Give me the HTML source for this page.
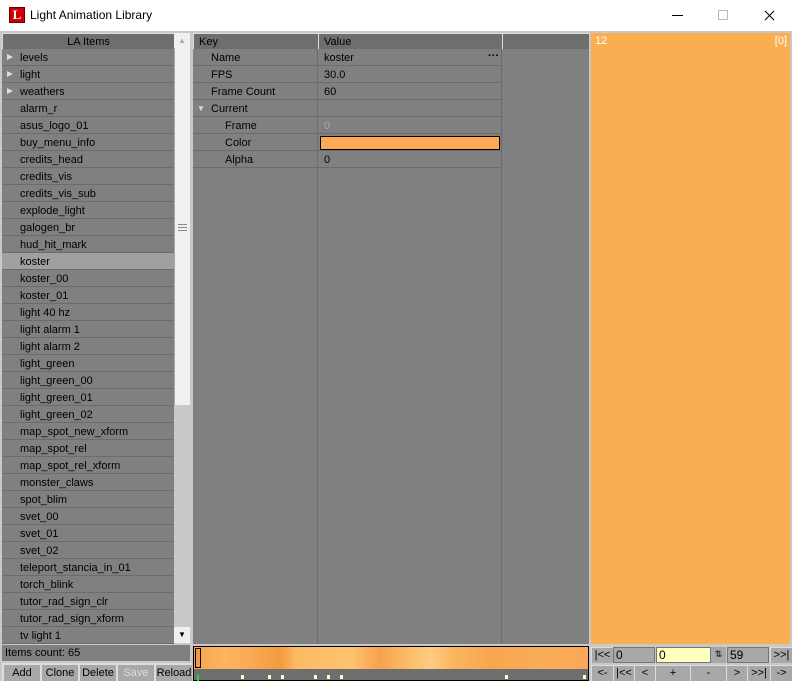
<!DOCTYPE html>
<html><head><meta charset="utf-8"><style>
*{margin:0;padding:0;box-sizing:border-box}
body{width:792px;height:681px;background:#fff;font-family:"Liberation Sans",sans-serif;font-size:11px;color:#000;position:relative;overflow:hidden}
.a{position:absolute}
.row{position:absolute;left:0;width:172px;height:17px;background:#808080;border-bottom:1px solid #6c6c6c;padding-left:18px;line-height:18px}
.tri{position:absolute;left:5px;top:5px;width:0;height:0;border-left:6px solid #ddd;border-top:3.5px solid transparent;border-bottom:3.5px solid transparent}
.pr{position:absolute;left:0;width:309px;height:17px;border-bottom:1px solid #6c6c6c;line-height:18px}
.pr span{top:0}
.btn{position:absolute;top:663px;height:18px;background:#a8a8a8;border-top:2px solid #ddd;border-left:2px solid #ddd;text-align:center;line-height:16px;font-size:11px}
.cb{position:absolute;height:16px;background:#a8a8a8;border-top:1px solid #ddd;border-left:1px solid #ddd;text-align:center;line-height:15px;font-size:11px}
</style></head><body>
<!-- title -->
<div class="a" style="left:9px;top:7px;width:16px;height:16px;background:#c00;border:1px solid #600;color:#fff;font-weight:bold;font-family:'Liberation Serif',serif;font-size:13px;line-height:14px;text-align:center">L</div>
<div class="a" style="left:30px;top:8px;font-size:12px">Light Animation Library</div>
<div class="a" style="left:672px;top:15px;width:11px;height:1px;background:#000"></div>
<div class="a" style="left:718px;top:10px;width:10px;height:10px;border:1px solid #bbb"></div>
<div class="a" style="left:763px;top:15px;width:13px;height:1px;background:#000;transform:rotate(45deg)"></div>
<div class="a" style="left:763px;top:15px;width:13px;height:1px;background:#000;transform:rotate(-45deg)"></div>
<!-- main bg -->
<div class="a" style="left:0;top:31px;width:792px;height:650px;background:#c8c8c8"></div>
<!-- left panel -->
<div class="a" style="left:2px;top:33px;width:172px;height:16px;background:#6e6e6e;border-top:1px solid #ddd;border-left:1px solid #ddd;text-align:center;line-height:16px">LA Items</div>
<div class="a" style="left:174px;top:33px;width:16px;height:15px;background:#f0f0f0;color:#aaa;font-size:8px;text-align:center;line-height:15px">▲</div>
<div class="a" style="left:174px;top:48px;width:16px;height:357px;background:#f0f0f0;border-left:1px solid #aaa"></div>
<div class="a" style="left:178px;top:224px;width:9px;height:7px;border-top:1px solid #888;border-bottom:1px solid #888"></div>
<div class="a" style="left:178px;top:227px;width:9px;height:1px;background:#888"></div>
<div class="a" style="left:174px;top:405px;width:16px;height:222px;background:#c8c8c8"></div>
<div class="a" style="left:174px;top:627px;width:16px;height:16px;background:#f0f0f0;font-size:8px;text-align:center;line-height:16px">▼</div>
<div class="a" style="left:2px;top:49px;width:172px;height:595px;background:#808080">
<div class="row" style="top:0"><span class="tri"></span>levels</div>
<div class="row" style="top:17px"><span class="tri"></span>light</div>
<div class="row" style="top:34px"><span class="tri"></span>weathers</div>
<div class="row" style="top:51px">alarm_r</div>
<div class="row" style="top:68px">asus_logo_01</div>
<div class="row" style="top:85px">buy_menu_info</div>
<div class="row" style="top:102px">credits_head</div>
<div class="row" style="top:119px">credits_vis</div>
<div class="row" style="top:136px">credits_vis_sub</div>
<div class="row" style="top:153px">explode_light</div>
<div class="row" style="top:170px">galogen_br</div>
<div class="row" style="top:187px">hud_hit_mark</div>
<div class="row" style="top:204px;background:#a0a0a0">koster</div>
<div class="row" style="top:221px">koster_00</div>
<div class="row" style="top:238px">koster_01</div>
<div class="row" style="top:255px">light 40 hz</div>
<div class="row" style="top:272px">light alarm 1</div>
<div class="row" style="top:289px">light alarm 2</div>
<div class="row" style="top:306px">light_green</div>
<div class="row" style="top:323px">light_green_00</div>
<div class="row" style="top:340px">light_green_01</div>
<div class="row" style="top:357px">light_green_02</div>
<div class="row" style="top:374px">map_spot_new_xform</div>
<div class="row" style="top:391px">map_spot_rel</div>
<div class="row" style="top:408px">map_spot_rel_xform</div>
<div class="row" style="top:425px">monster_claws</div>
<div class="row" style="top:442px">spot_blim</div>
<div class="row" style="top:459px">svet_00</div>
<div class="row" style="top:476px">svet_01</div>
<div class="row" style="top:493px">svet_02</div>
<div class="row" style="top:510px">teleport_stancia_in_01</div>
<div class="row" style="top:527px">torch_blink</div>
<div class="row" style="top:544px">tutor_rad_sign_clr</div>
<div class="row" style="top:561px">tutor_rad_sign_xform</div>
<div class="row" style="top:578px">tv light 1</div>
</div>
<div class="a" style="left:2px;top:645px;width:188px;height:16px;background:#808080;padding-left:3px;line-height:17px">Items count: 65</div>
<div class="btn" style="left:2px;width:38px">Add</div>
<div class="btn" style="left:40px;width:38px">Clone</div>
<div class="btn" style="left:78px;width:38px">Delete</div>
<div class="btn" style="left:116px;width:38px;color:#ddd">Save</div>
<div class="btn" style="left:154px;width:38px">Reload</div>
<!-- middle -->
<div class="a" style="left:193px;top:33px;width:396px;height:611px;background:#808080"></div>
<div class="a" style="left:193px;top:33px;width:125px;height:16px;background:#6e6e6e;border-top:1px solid #ddd;border-left:1px solid #ddd;padding-left:5px;line-height:16px">Key</div>
<div class="a" style="left:318px;top:33px;width:184px;height:16px;background:#6e6e6e;border-top:1px solid #ddd;border-left:1px solid #ddd;padding-left:5px;line-height:16px">Value</div>
<div class="a" style="left:502px;top:33px;width:87px;height:16px;background:#6e6e6e;border-top:1px solid #ddd;border-left:1px solid #ddd"></div>
<div class="a" style="left:317px;top:49px;width:1px;height:595px;background:#6c6c6c"></div>
<div class="a" style="left:501px;top:49px;width:1px;height:595px;background:#6c6c6c"></div>
<div class="a" style="left:193px;top:49px;width:309px;height:136px">
<div class="pr" style="top:0"><span class="a" style="left:18px">Name</span><span class="a" style="left:131px">koster</span><span class="a" style="left:295px;font-weight:bold;top:-2px">···</span></div>
<div class="pr" style="top:17px"><span class="a" style="left:18px">FPS</span><span class="a" style="left:131px">30.0</span></div>
<div class="pr" style="top:34px"><span class="a" style="left:18px">Frame Count</span><span class="a" style="left:131px">60</span></div>
<div class="pr" style="top:51px"><span class="a" style="left:4px;font-size:8px;color:#ddd">▼</span><span class="a" style="left:18px">Current</span></div>
<div class="pr" style="top:68px"><span class="a" style="left:32px">Frame</span><span class="a" style="left:131px;color:#aaa">0</span></div>
<div class="pr" style="top:85px"><span class="a" style="left:32px">Color</span><span class="a" style="left:127px;top:2px;width:180px;height:14px;background:#fda855;border:1px solid #000"></span></div>
<div class="pr" style="top:102px"><span class="a" style="left:32px">Alpha</span><span class="a" style="left:131px">0</span></div>
</div>
<!-- right orange -->
<div class="a" style="left:591px;top:33px;width:199px;height:611px;background:#f9ae52;color:#fff;font-size:11px"><span class="a" style="left:4px;top:2px">12</span><span class="a" style="right:3px;top:2px">[0]</span></div>
<!-- timeline -->
<div class="a" style="left:193px;top:646px;width:396px;height:35px;background:#6e6e6e;border:1px solid #000"></div>
<div class="a" style="left:194px;top:647px;width:394px;height:22px;background:linear-gradient(90deg,#f8a54e 0%,#fbb461 8%,#f9a953 15%,#f39a3f 22%,#fcbb65 26%,#fec26e 40%,#f7a34d 47%,#fdbe6b 55%,#fecb84 60%,#fbb660 66%,#f7a64f 75%,#f9ad56 88%,#fba85a 100%)"></div>
<div class="a" style="left:195px;top:648px;width:6px;height:20px;background:#f09a4a;border:1px solid #000"></div>
<div class="a" style="left:197px;top:674px;width:2px;height:7px;background:#3c3"></div>
<div class="a" style="left:241px;top:675px;width:3px;height:4px;background:#ffc"></div>
<div class="a" style="left:268px;top:675px;width:3px;height:4px;background:#ffc"></div>
<div class="a" style="left:281px;top:675px;width:3px;height:4px;background:#ffc"></div>
<div class="a" style="left:314px;top:675px;width:3px;height:4px;background:#ffc"></div>
<div class="a" style="left:327px;top:675px;width:3px;height:4px;background:#ffc"></div>
<div class="a" style="left:340px;top:675px;width:3px;height:4px;background:#ffc"></div>
<div class="a" style="left:505px;top:675px;width:3px;height:4px;background:#ffc"></div>
<div class="a" style="left:583px;top:675px;width:3px;height:4px;background:#ffc"></div>
<!-- controls -->
<div class="cb" style="left:591px;top:647px;width:22px">|&lt;&lt;</div>
<div class="a" style="left:613px;top:647px;width:42px;height:16px;background:#a8a8a8;border:1px solid #777;padding-left:2px;line-height:14px;font-size:12px">0</div>
<div class="a" style="left:656px;top:647px;width:55px;height:16px;background:#ffffc0;border:1px solid #777;padding-left:2px;line-height:14px;font-size:12px">0</div>
<div class="a" style="left:711px;top:647px;width:15px;height:16px;background:#a8a8a8;font-size:9px;line-height:14px;text-align:center">⇅</div>
<div class="a" style="left:727px;top:647px;width:42px;height:16px;background:#a8a8a8;border:1px solid #777;padding-left:2px;line-height:14px;font-size:12px">59</div>
<div class="cb" style="left:770px;top:647px;width:22px">&gt;&gt;|</div>
<div class="cb" style="left:591px;top:665px;width:22px">&lt;-</div>
<div class="cb" style="left:613px;top:665px;width:21px">|&lt;&lt;</div>
<div class="cb" style="left:634px;top:665px;width:21px">&lt;</div>
<div class="cb" style="left:655px;top:665px;width:35px">+</div>
<div class="cb" style="left:690px;top:665px;width:36px">-</div>
<div class="cb" style="left:726px;top:665px;width:21px">&gt;</div>
<div class="cb" style="left:747px;top:665px;width:23px">&gt;&gt;|</div>
<div class="cb" style="left:770px;top:665px;width:22px">-&gt;</div>
</body></html>
